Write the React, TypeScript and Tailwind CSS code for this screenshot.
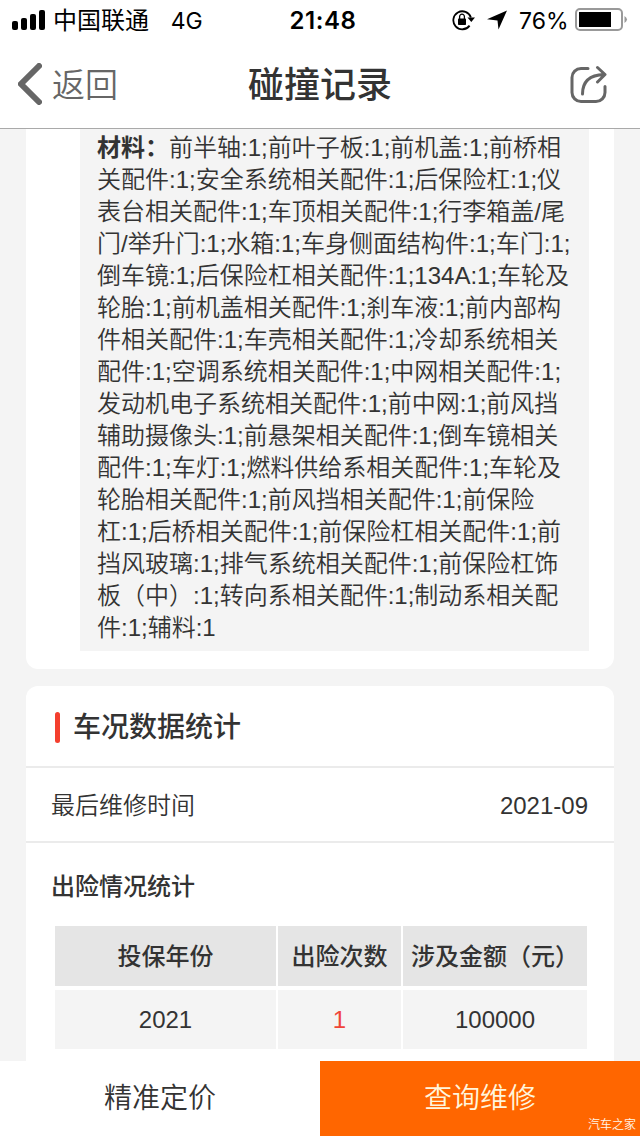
const lines = [
  '关配件:1;安全系统相关配件:1;后保险杠:1;仪',
  '表台相关配件:1;车顶相关配件:1;行李箱盖/尾',
  '门/举升门:1;水箱:1;车身侧面结构件:1;车门:1;',
  '倒车镜:1;后保险杠相关配件:1;134A:1;车轮及',
  '轮胎:1;前机盖相关配件:1;刹车液:1;前内部构',
  '件相关配件:1;车壳相关配件:1;冷却系统相关',
  '配件:1;空调系统相关配件:1;中网相关配件:1;',
  '发动机电子系统相关配件:1;前中网:1;前风挡',
  '辅助摄像头:1;前悬架相关配件:1;倒车镜相关',
  '配件:1;车灯:1;燃料供给系相关配件:1;车轮及',
  '轮胎相关配件:1;前风挡相关配件:1;前保险',
  '杠:1;后桥相关配件:1;前保险杠相关配件:1;前',
  '挡风玻璃:1;排气系统相关配件:1;前保险杠饰',
  '板（中）:1;转向系相关配件:1;制动系相关配',
  '件:1;辅料:1',
];

function StatusBar() {
  return (
    <div className="flex h-10 items-center pl-3 pr-3 font-['Inter','Noto_Sans_CJK_SC',sans-serif] text-[24px] leading-10 font-normal text-black">
      <svg width="33" height="20" viewBox="0 0 33 20" className="shrink-0">
        <rect x="0" y="11" width="6" height="9" rx="2" />
        <rect x="9" y="8" width="6" height="12" rx="2" />
        <rect x="18" y="4" width="6" height="16" rx="2" />
        <rect x="27" y="0" width="6" height="20" rx="2" />
      </svg>
      <span className="ml-2 w-[118px] pt-0.5 whitespace-nowrap">中国联通</span>
      <span className="w-[119px] pt-0.5 whitespace-nowrap text-[23px]">4G</span>
      <span className="w-[163px] pt-0.5 whitespace-nowrap text-[24px] tracking-[0.6px] font-semibold">21:48</span>
      <svg width="23" height="22" viewBox="0 0 23 22" className="shrink-0">
        <path d="M17.6 16.6A9 9 0 1 1 18.9 8.500" fill="none" stroke="#000" strokeWidth="1.8" />
        <path d="M15.500 8.500h7.500l-3.700 4.500z" />
        <rect x="6" y="9.500" width="8" height="6.500" rx="0.8" />
        <path d="M7.600 10V7.600a2.400 2.400 0 0 1 4.800 0V10" fill="none" stroke="#000" strokeWidth="1.3" />
      </svg>
      <svg width="20" height="20" viewBox="0 0 20 20" className="ml-3 shrink-0">
        <path d="M20 0.500 11.500 19.500 10.500 10.500 0 9.200z" />
      </svg>
      <span className="ml-3 w-14 pt-0.5 whitespace-nowrap text-[23px]">76%</span>
      <svg width="53" height="24" viewBox="0 0 53 24" className="shrink-0">
        <rect x="1" y="1" width="46" height="21" rx="4" fill="none" stroke="#999" strokeWidth="2" />
        <rect x="4" y="4" width="32" height="15" />
        <path d="M49.500 8q5 3.500 0 7z" fill="#999" />
      </svg>
    </div>
  );
}

export default function App() {
  return (
    <div className="flex h-[1136px] w-[640px] flex-col overflow-hidden bg-[#f4f4f4] font-['Liberation_Sans','Noto_Sans_CJK_SC',sans-serif] text-[24px] font-[350] text-[#333]">
      <header className="h-[129px] shrink-0 border-b border-[#a9a9a9] bg-white">
        <StatusBar />
        <div className="flex h-[88px] items-center justify-between pl-[18px] pr-[33px]">
          <div className="flex w-[200px] items-center text-[33px] text-[#666]">
            <svg width="24" height="42" viewBox="0 0 24 42" className="shrink-0">
              <path d="M21 3 3 21 21 39" fill="none" stroke="#666" strokeWidth="6" strokeLinecap="round" />
            </svg>
            <span className="ml-2.5 pt-[3px]">返回</span>
          </div>
          <h1 className="pt-1 text-[36px] font-medium whitespace-nowrap">碰撞记录</h1>
          <div className="flex w-[185px] justify-end">
            <svg width="37" height="38" viewBox="0 0 37 38" fill="none" stroke="#666" strokeWidth="3" strokeLinecap="round" strokeLinejoin="round">
              <path d="M18 3.500H11A9 9 0 0 0 2 12.500V27.500A9 9 0 0 0 11 36.500H26A9 9 0 0 0 35 27.500V21.500" />
              <path d="M12.500 29C12.500 17 19 10 34 9.500M27.500 2.500 35 9.500 27.500 17" />
            </svg>
          </div>
        </div>
      </header>

      <main className="flex h-[932px] shrink-0 flex-col gap-[17px] overflow-hidden px-[26px]">
        <section className="h-[540px] shrink-0 rounded-b-xl bg-white pr-[25px] pl-[54px]">
          <div className="h-[522px] bg-[#f4f4f4] pt-[3px] pl-[17px] leading-8 whitespace-nowrap">
            <div>
              <span className="font-bold">材料：</span>前半轴:1;前叶子板:1;前机盖:1;前桥相
            </div>
            {lines.map((line) => (
              <div key={line}>{line}</div>
            ))}
          </div>
        </section>

        <section className="h-[390px] shrink-0 rounded-t-xl bg-white">
          <div className="flex h-[82px] items-center border-b-2 border-[#ebebeb] pl-[29px]">
            <span className="mt-0.5 h-[31px] w-[5px] rounded-sm bg-[#f43f2e]" />
            <h2 className="ml-[13px] pt-1 text-[28px] font-medium">车况数据统计</h2>
          </div>
          <div className="flex h-[75px] items-center justify-between border-b-2 border-[#ebebeb] pt-0.5 pr-[26px] pl-[25px]">
            <span>最后维修时间</span>
            <span>2021-09</span>
          </div>
          <h3 className="mt-[26px] pl-[25px] leading-9 font-medium">出险情况统计</h3>
          <div className="mt-[21px] ml-[29px] grid w-[532px] grid-cols-[221px_123px_184px] gap-x-0.5 gap-y-1 text-center">
            <div className="h-[60px] bg-[#e5e5e5] leading-[62px] font-medium">投保年份</div>
            <div className="h-[60px] bg-[#e5e5e5] leading-[62px] font-medium">出险次数</div>
            <div className="h-[60px] bg-[#e5e5e5] pl-2 text-left leading-[62px] font-medium whitespace-nowrap">涉及金额（元）</div>
            <div className="h-[59px] bg-[#f4f4f4] leading-[59px]">2021</div>
            <div className="bg-[#f4f4f4] leading-[59px] text-[#f04438]">1</div>
            <div className="bg-[#f4f4f4] leading-[59px]">100000</div>
          </div>
        </section>
      </main>

      <footer className="relative grid h-[75px] shrink-0 grid-cols-2 text-center text-[28px] leading-[75px]">
        <div className="bg-white">精准定价</div>
        <div className="bg-[#ff6600] text-[#fff5dc]">查询维修</div>
        <span className="absolute right-1 bottom-0.5 text-[12px] leading-[18px] text-[#fff5e8]">汽车之家</span>
      </footer>
    </div>
  );
}
